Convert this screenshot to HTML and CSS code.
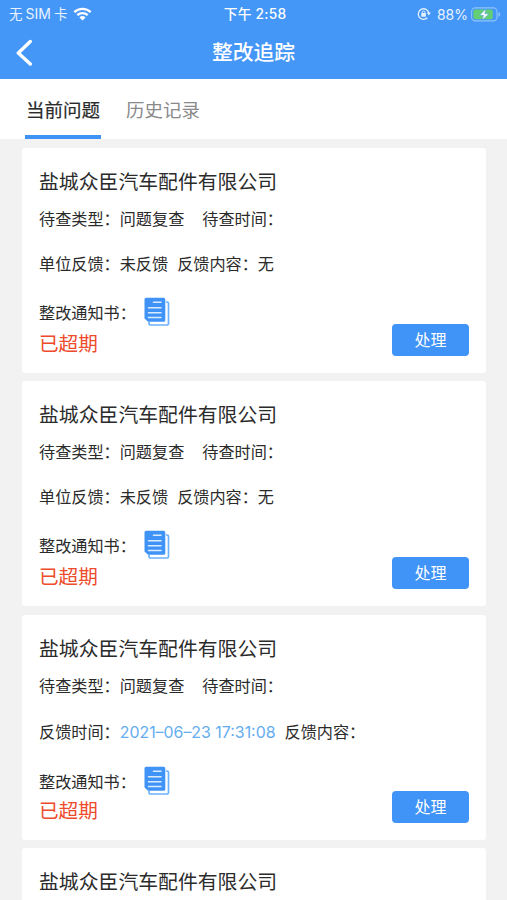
FILE: index.html
```html
<!DOCTYPE html>
<html lang="zh-CN">
<head>
	<meta charset="UTF-8">
	<meta name="viewport" content="width=device-width, initial-scale=1.0">
	<title>整改追踪</title>
	<link rel="stylesheet" href="styles.css">
</head>
<body>
	<!-- 图标 -->
	<svg class="defs" width="0" height="0">
		<symbol id="doc" viewBox="0 0 26 30">
			<path d="M22 5h1a1.500 1.500 0 0 1 1.500 1.500v20a1.500 1.500 0 0 1-1.500 1.500H6.500A1.500 1.500 0 0 1 5 26.500V25" fill="none" stroke="#6cb2fc" stroke-width="1.700"/>
			<path d="M2 .8h17.700a1.600 1.600 0 0 1 1.600 1.600v20.800a1.600 1.600 0 0 1-1.600 1.600H4L.5 21.500V2.400A1.600 1.600 0 0 1 2 .8z" fill="#3f93f7"/>
			<path d="M9.500 5.300h7.500M4.500 10.700H17M4.500 15.700H17M4.500 20.500H17" fill="none" stroke="#d9ebff" stroke-width="1.600" stroke-linecap="round"/>
		</symbol>
	</svg>

	<div class="header">
		<div class="status">
			<div class="status-l">
				<span class="carrier">无<i>SIM</i>卡</span>
				<svg class="wifi" width="19" height="14" viewBox="0 0 19 14">
					<path d="M1.300 5.100a11.800 11.800 0 0 1 16.400 0M4.300 8.200a7.500 7.500 0 0 1 10.400 0" fill="none" stroke="#fff" stroke-width="2.300"/>
					<path d="M6.400 10.500a4.500 4.500 0 0 1 6.200 0L9.500 13.600z" fill="#fff"/>
				</svg>
			</div>
			<div class="status-m">下午 2:58</div>
			<div class="status-r">
				<svg class="lock" width="14" height="14" viewBox="0 0 14 14">
					<path d="M11.800 6A5.300 5.300 0 1 0 10.400 10.800" fill="none" stroke="#e4f1ff" stroke-width="1.300"/>
					<path d="M9.800 5.600H14l-2.100 2.900z" fill="#e4f1ff"/>
					<path d="M5.200 6.200v-.8a1.400 1.400 0 0 1 2.800 0v.8" fill="none" stroke="#e4f1ff" stroke-width="1"/>
					<rect x="4.300" y="6" width="4.600" height="3.700" rx=".5" fill="#e4f1ff"/>
				</svg>
				<span class="percent">88%</span>
				<svg class="battery" width="30" height="15" viewBox="0 0 30 15">
					<rect x=".6" y=".9" width="25.400" height="13" rx="3.800" fill="none" stroke="#8fc3fb" stroke-width="1.100"/>
					<path d="M27.400 5v5c1.100-.4 1.800-1.400 1.800-2.500S28.500 5.400 27.400 5z" fill="#8fc3fb"/>
					<rect x="2.300" y="2.600" width="19.500" height="9.600" rx="2.200" fill="#64cf72"/>
					<path d="M14.800 2L8.500 8.300h3.900l-1.100 4.700L18 6.800h-4.200z" fill="#fff" stroke="#4697f7" stroke-width=".5"/>
				</svg>
			</div>
		</div>
		<div class="nav">
			<svg class="back" width="18" height="28" viewBox="0 0 18 28">
				<path d="M14.300 2.500L2.300 14l12 11" fill="none" stroke="#fff" stroke-width="3.400" stroke-linecap="round" stroke-linejoin="round"/>
			</svg>
			<h1>整改追踪</h1>
		</div>
	</div>

	<div class="tabs">
		<div class="tab active">当前问题</div>
		<div class="tab">历史记录</div>
	</div>

	<div class="list">
		<div class="card">
			<h2>盐城众臣汽车配件有限公司</h2>
			<div class="row type"><span>待查类型：问题复查</span><span>待查时间：</span></div>
			<div class="row feedback"><span>单位反馈：未反馈</span><span>反馈内容：无</span></div>
			<div class="bottom">
				<div class="info">
					<div class="notice">整改通知书：<svg class="doc"><use href="#doc"/></svg></div>
					<div class="overdue">已超期</div>
				</div>
				<button class="btn">处理</button>
			</div>
		</div>
		<div class="card">
			<h2>盐城众臣汽车配件有限公司</h2>
			<div class="row type"><span>待查类型：问题复查</span><span>待查时间：</span></div>
			<div class="row feedback"><span>单位反馈：未反馈</span><span>反馈内容：无</span></div>
			<div class="bottom">
				<div class="info">
					<div class="notice">整改通知书：<svg class="doc"><use href="#doc"/></svg></div>
					<div class="overdue">已超期</div>
				</div>
				<button class="btn">处理</button>
			</div>
		</div>
		<div class="card replied">
			<h2>盐城众臣汽车配件有限公司</h2>
			<div class="row type"><span>待查类型：问题复查</span><span>待查时间：</span></div>
			<div class="row feedback"><span>反馈时间：<em>2021–06–23 17:31:08</em></span><span>反馈内容：</span></div>
			<div class="bottom">
				<div class="info">
					<div class="notice">整改通知书：<svg class="doc"><use href="#doc"/></svg></div>
					<div class="overdue">已超期</div>
				</div>
				<button class="btn">处理</button>
			</div>
		</div>
		<div class="card last">
			<h2>盐城众臣汽车配件有限公司</h2>
		</div>
	</div>
</body>
</html>
```
FILE: styles.css
```css
*{
	margin: 0;
	padding: 0;
	box-sizing: border-box;
}
body{
	height: 900px;
	overflow: hidden;
	background: #f2f2f2;
	color: #2b2b2b;
	font-family: "Inter", "Noto Sans CJK SC", sans-serif;
	display: flex;
	flex-direction: column;
}
i,em{
	font-style: normal;
}
svg{
	display: block;
	flex: none;
}
.defs{
	position: absolute;
}
/*顶部*/
.header{
	height: 79px;
	flex: none;
	background: #4496f7;
	color: #fff;
}
.status{
	height: 27px;
	display: grid;
	grid-template-columns: 1fr auto 1fr;
	align-items: center;
	padding: 0 6px 0 9px;
	font-size: 14px;
	line-height: 27px;
}
.status-l,.status-r{
	display: flex;
	align-items: center;
	color: #e9f3ff;
}
.status-r{
	justify-content: flex-end;
}
.carrier{
	font-size: 13.5px;
}
.carrier i{
	margin: 0 3px;
	font-size: 14px;
}
.wifi{
	margin-left: 6px;
}
.status-m{
	font-size: 13.8px;
	font-weight: 500;
	letter-spacing: .2px;
}
.percent{
	margin: 0 3px 0 6px;
	font-size: 14px;
}
.nav{
	height: 52px;
	display: grid;
	grid-template-columns: 40px 1fr 40px;
	align-items: center;
}
.back{
	margin-left: 16px;
}
.nav h1{
	text-align: center;
	font-size: 20.8px;
	font-weight: 500;
	line-height: 52px;
}
/*选项卡*/
.tabs{
	height: 60px;
	flex: none;
	display: flex;
	gap: 24px;
	padding-left: 25px;
	background: #fff;
}
.tab{
	height: 60px;
	padding: 0 1px;
	font-size: 18.5px;
	line-height: 62px;
	color: #8a8a8a;
}
.tab.active{
	color: #2b2b2b;
	background: linear-gradient(#3f93f7, #3f93f7) 0 56px / 100% 4px no-repeat;
	-webkit-text-stroke: .2px #2b2b2b;
}
/*列表*/
.list{
	flex: 1;
	min-height: 0;
	padding: 9px 21px 0 22px;
	display: flex;
	flex-direction: column;
	gap: 8.4px;
}
.card{
	height: 225px;
	flex: none;
	padding: 19px 17px 17px;
	background: #fff;
	border-radius: 3px;
	display: flex;
	flex-direction: column;
}
.card.last{
	height: auto;
	flex: 1;
	min-height: 0;
	padding-bottom: 0;
	border-radius: 3px 3px 0 0;
}
.card h2{
	height: 30px;
	font-size: 19.85px;
	font-weight: 400;
	line-height: 30px;
}
.row{
	display: flex;
	font-size: 16.15px;
	white-space: nowrap;
}
.type{
	height: 45px;
	line-height: 45px;
	gap: 18px;
}
.feedback{
	height: 44px;
	line-height: 44px;
	gap: 9px;
}
.feedback em{
	font-size: 15.9px;
	color: #64adf0;
}
.bottom{
	flex: 1;
	display: flex;
	justify-content: space-between;
	align-items: flex-end;
}
.notice{
	height: 36px;
	display: flex;
	align-items: center;
	font-size: 16.15px;
}
.doc{
	width: 26px;
	height: 30px;
	margin-left: 8px;
}
.overdue{
	height: 26px;
	font-size: 19.6px;
	line-height: 28px;
	color: #ed4b2c;
}
.btn{
	width: 77px;
	height: 32px;
	border: none;
	border-radius: 4px;
	background: #4093f7;
	color: #fff;
	font-family: inherit;
	font-size: 16px;
	line-height: 32px;
}
/*已反馈的卡片*/
.replied .feedback{
	height: 46px;
	line-height: 46px;
}
.replied .overdue{
	height: 24px;
	line-height: 24px;
}
```
